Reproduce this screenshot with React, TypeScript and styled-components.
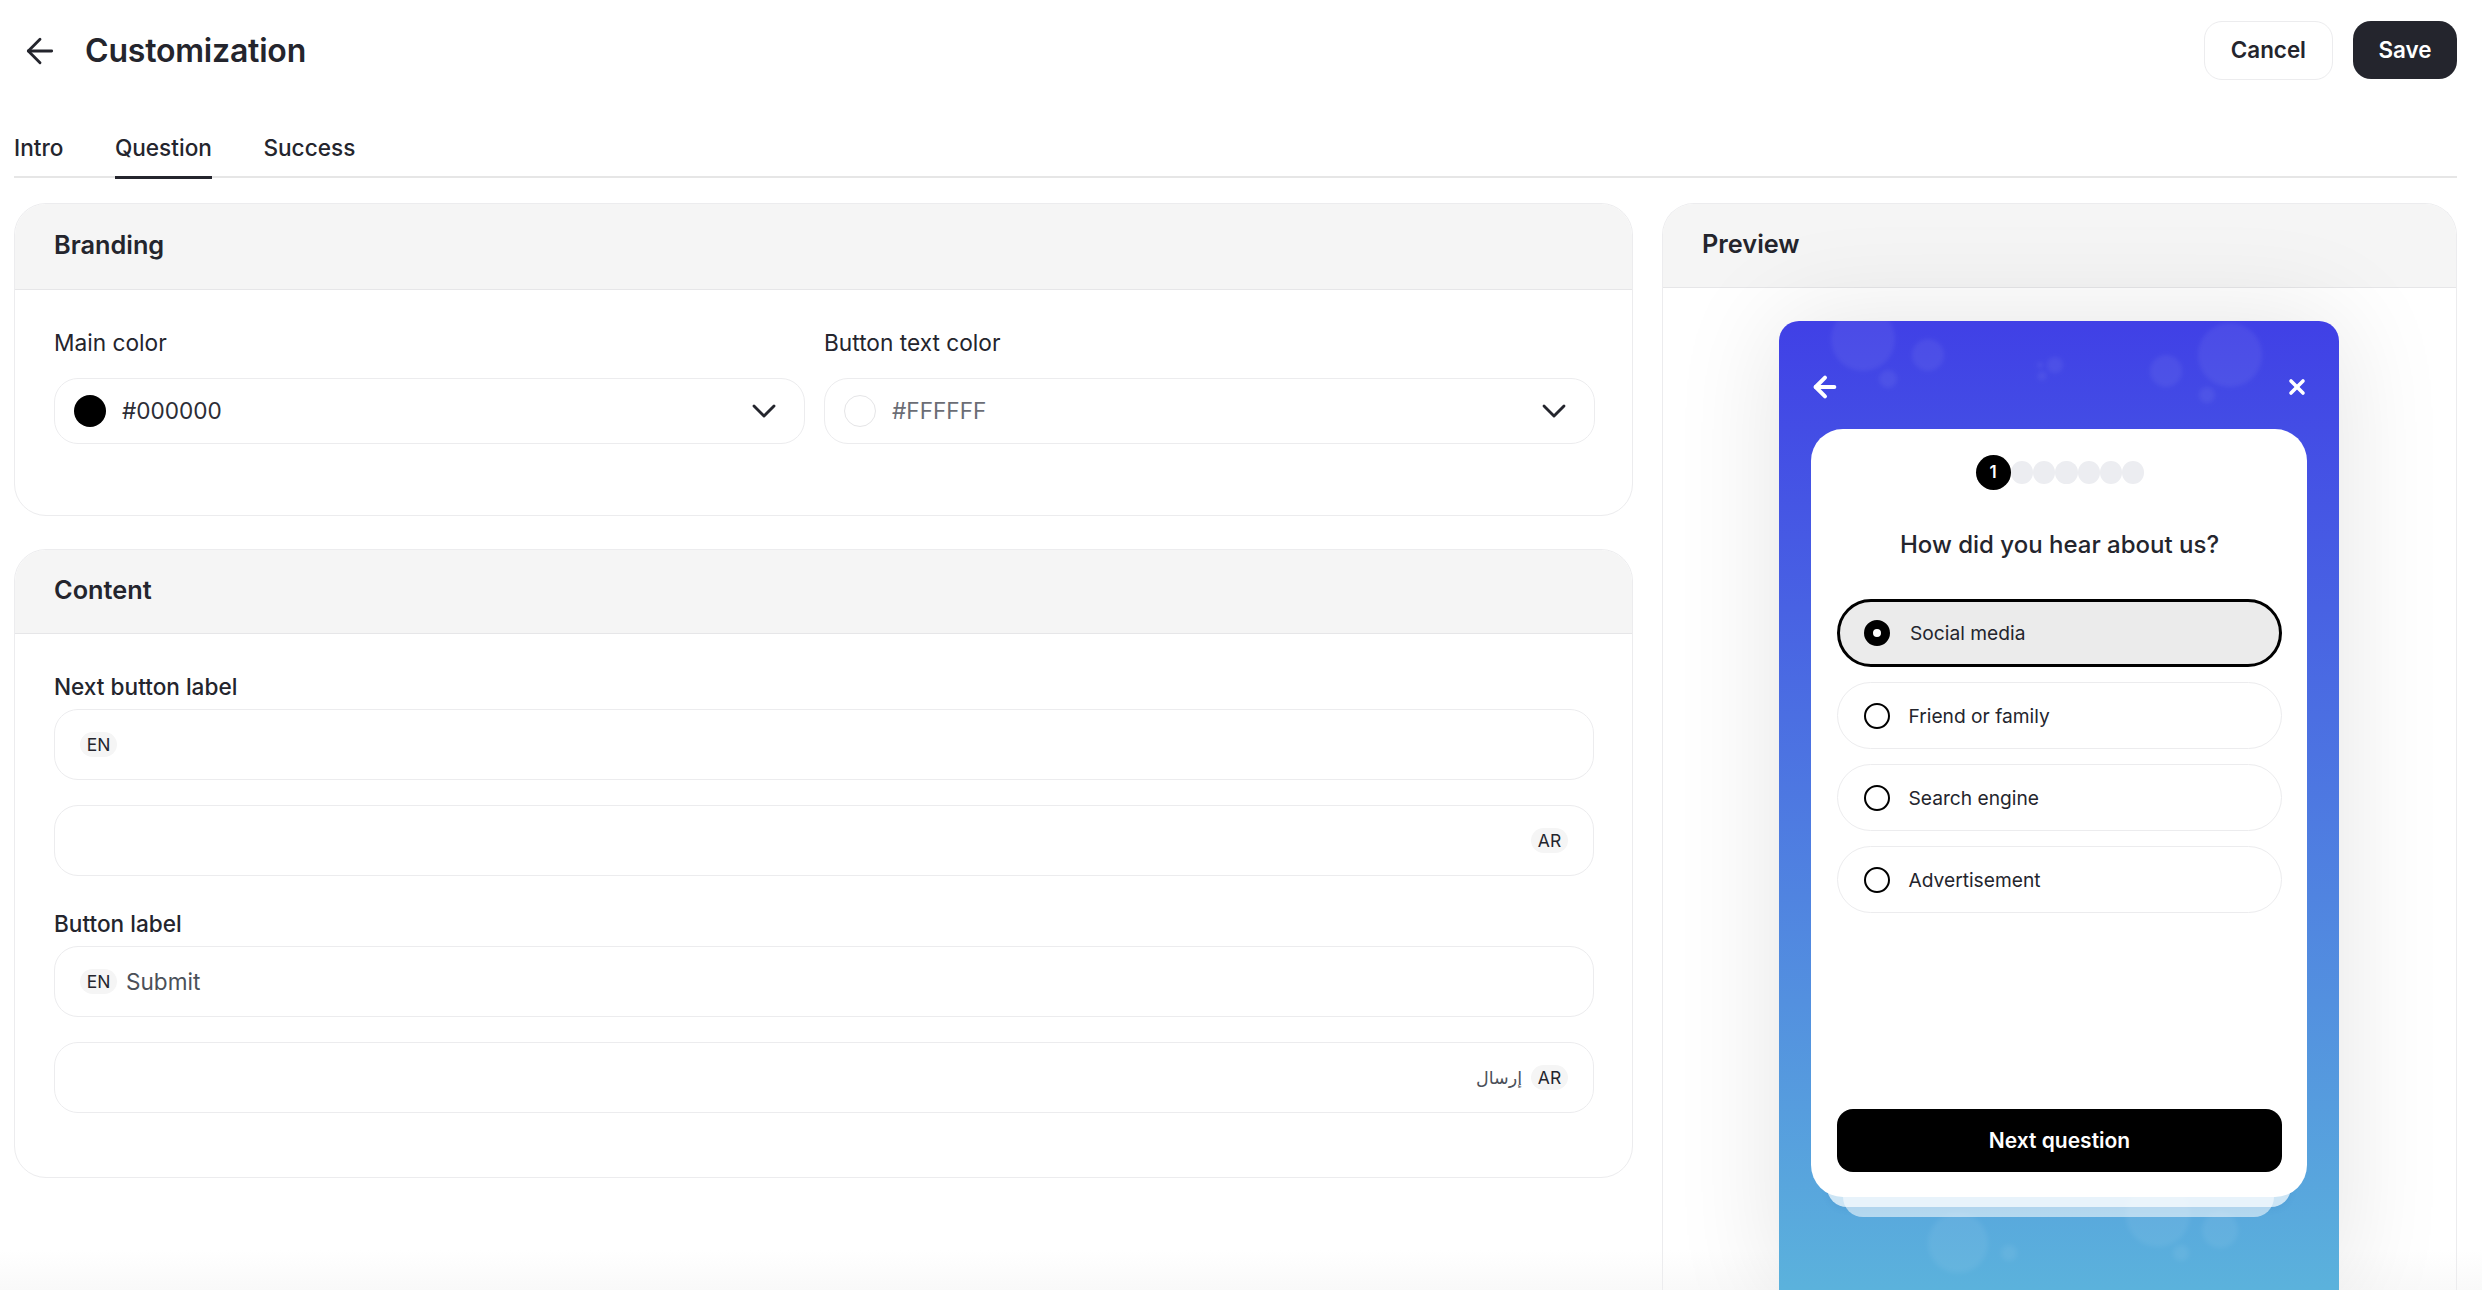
import React from "react";
import styled, { createGlobalStyle } from "styled-components";
import { ArrowLeft, ChevronDown, X } from "lucide-react";

const Global = createGlobalStyle`
  html, body { margin: 0; padding: 0; background: #fff; }
  body { font-family: Inter, "Noto Sans", sans-serif; color: #24252d; -webkit-font-smoothing: antialiased; }
  * { box-sizing: border-box; }
`;

const Page = styled.div`
  position: relative;
  width: 2482px;
  height: 1290px;
  overflow: hidden;
  padding: 0 25px 0 14px;
`;
const BottomFade = styled.div`
  position: absolute;
  left: 0;
  right: 0;
  bottom: 0;
  height: 40px;
  background: linear-gradient(to bottom, rgba(245, 245, 245, 0), rgba(245, 245, 245, 0.6));
  pointer-events: none;
`;
const Header = styled.header`
  position: relative;
  height: 102px;
  display: flex;
  align-items: center;
  justify-content: space-between;
`;
const TitleGroup = styled.div`
  display: flex;
  align-items: center;
  gap: 25px;
  padding-left: 6px;
`;
const Title = styled.h1`
  margin: 0;
  font-size: 32px;
  font-weight: 600;
  line-height: 40px;
  letter-spacing: -0.2px;
`;
const Actions = styled.div`
  display: flex;
  align-items: flex-start;
  gap: 20px;
  margin-top: -1px;
`;
const Button = styled.button<{ $primary?: boolean }>`
  height: ${(p) => (p.$primary ? 58 : 59)}px;
  padding: 0 ${(p) => (p.$primary ? 25.5 : 26)}px;
  border-radius: 18px;
  font: 600 22.4px/1 Inter, sans-serif;
  color: ${(p) => (p.$primary ? "#fff" : "#24252d")};
  background: ${(p) => (p.$primary ? "#24252d" : "#fff")};
  border: ${(p) => (p.$primary ? "none" : "1px solid #ececee")};
`;
const Tabs = styled.nav`
  position: relative;
  display: flex;
  gap: 51.5px;
  border-bottom: 2px solid #e6e6e6;
  height: 76px;
`;
const Tab = styled.div<{ $active?: boolean }>`
  padding-top: 30px;
  height: 77px;
  font-size: 22.6px;
  line-height: 32px;
  font-weight: 500;
  color: #24252d;
  border-bottom: 3px solid ${(p) => (p.$active ? "#24252d" : "transparent")};
`;
const Columns = styled.div`
  position: relative;
  display: grid;
  grid-template-columns: 1619px 795px;
  gap: 29px;
  margin-top: 25px;
  align-items: start;
`;
const LeftColumn = styled.div`
  display: flex;
  flex-direction: column;
  gap: 33px;
`;
const Card = styled.section`
  border: 1px solid #ececee;
  border-radius: 32px;
  overflow: hidden;
  background: #fff;
`;
const CardHeader = styled.div<{ $h?: number }>`
  height: ${(p) => p.$h ?? 86}px;
  padding: 0 39px 3px;
  display: flex;
  align-items: center;
  background: #f5f5f5;
  border-bottom: 1px solid #e6e6e8;
  border-radius: 31px 31px 0 0;
`;
const CardTitle = styled.h2`
  margin: 0;
  font-size: 25.3px;
  line-height: 32px;
  font-weight: 600;
`;
const BrandingBody = styled.div`
  display: grid;
  grid-template-columns: 751px 771px;
  gap: 19px;
  padding: 37px 38px 71px 39px;
`;
const FieldGroup = styled.div`
  display: flex;
  flex-direction: column;
  gap: 19px;
`;
const PlainLabel = styled.div`
  font-size: 22.7px;
  line-height: 32px;
  font-weight: 400;
  color: #24252d;
`;
const Select = styled.div`
  height: 66px;
  border: 1px solid #ececee;
  border-radius: 24px;
  padding: 0 20px 0 19px;
  display: flex;
  align-items: center;
`;
const Swatch = styled.span<{ $color: string }>`
  width: 32px;
  height: 32px;
  border-radius: 50%;
  background: ${(p) => p.$color};
  border: ${(p) => (p.$color === "#000000" ? "none" : "1px solid #e5e5e7")};
  flex: none;
  margin-right: 16px;
`;
const SelectValue = styled.span<{ $muted?: boolean }>`
  flex: 1;
  font-size: 22.6px;
  line-height: 32px;
  color: ${(p) => (p.$muted ? "#6b6d75" : "#2c2d35")};
`;
const ContentBody = styled.div`
  padding: 37px 38px 64px 39px;
  display: flex;
  flex-direction: column;
  gap: 32px;
`;
const LangGroup = styled.div`
  display: flex;
  flex-direction: column;
`;
const StrongLabel = styled.div`
  font-size: 22.6px;
  line-height: 32px;
  font-weight: 500;
  margin-bottom: 6px;
`;
const LangInput = styled.div<{ $rtl?: boolean }>`
  height: 71px;
  border: 1px solid #ececee;
  border-radius: 24px;
  padding: 0 25px;
  display: flex;
  flex-direction: ${(p) => (p.$rtl ? "row-reverse" : "row")};
  align-items: center;
  gap: 9px;
  & + & {
    margin-top: 25px;
  }
`;
const LangPill = styled.span`
  width: 37px;
  height: 25px;
  border-radius: 13px;
  background: #f5f5f5;
  font-size: 17.5px;
  line-height: 25px;
  font-weight: 400;
  text-align: center;
  color: #24252d;
`;
const InputText = styled.span<{ $arabic?: boolean }>`
  font-family: ${(p) => (p.$arabic ? '"DejaVu Sans", sans-serif' : "Inter, sans-serif")};
  font-size: ${(p) => (p.$arabic ? 17.5 : 22.6)}px;
  line-height: 32px;
  color: #4b5059;
`;
const PreviewCard = styled.section`
  height: 1087px;
  border: 1px solid #ececee;
  border-bottom: none;
  border-radius: 32px 32px 0 0;
`;
const PreviewBody = styled.div`
  padding: 33px 0 0 116px;
`;
const Phone = styled.div`
  position: relative;
  width: 560px;
  height: 969px;
  border-radius: 20px 20px 0 0;
  background: linear-gradient(to bottom, #4040e6 0%, #5bb2dc 100%);
  box-shadow: 0 0 110px rgba(0, 0, 0, 0.11);
  padding: 0 32px;
`;
const Bubbles = styled.svg`
  position: absolute;
  inset: 0;
  width: 100%;
  height: 100%;
  border-radius: 20px 20px 0 0;
`;
const PhoneTop = styled.div`
  position: relative;
  height: 108px;
  display: flex;
  align-items: center;
  justify-content: space-between;
  color: #fff;
  margin: 0 -2px 0 -2px;
  & > svg {
    margin-top: 24px;
  }
`;
const QuizStack = styled.div`
  position: relative;
  &::before,
  &::after {
    content: "";
    position: absolute;
    border-radius: 0 0 20px 20px;
    top: 700px;
  }
  &::before {
    left: 16px;
    right: 16px;
    bottom: -10px;
    background: rgba(255, 255, 255, 0.7);
    box-shadow: 0 2px 6px rgba(60, 110, 170, 0.12);
  }
  &::after {
    left: 32px;
    right: 33px;
    bottom: -20px;
    background: rgba(255, 255, 255, 0.55);
  }
`;
const QuizCard = styled.div`
  position: relative;
  z-index: 1;
  height: 768px;
  background: #fff;
  border-radius: 32px;
  padding: 26px 25px 25px 26px;
  display: flex;
  flex-direction: column;
  align-items: stretch;
`;
const Steps = styled.div`
  display: flex;
  align-items: center;
  justify-content: center;
  height: 35px;
  padding-left: 1px;
`;
const StepCurrent = styled.span`
  width: 35px;
  height: 35px;
  border-radius: 50%;
  background: #000;
  color: #fff;
  font-size: 17px;
  font-weight: 600;
  line-height: 35px;
  text-align: center;
`;
const StepDot = styled.span`
  width: 22.3px;
  height: 23px;
  border-radius: 50%;
  background: #ecedf1;
`;
const Question = styled.h3`
  margin: 38px 0 0;
  font-size: 24px;
  line-height: 34px;
  font-weight: 500;
  color: #24252d;
  text-align: center;
`;
const Options = styled.div`
  display: flex;
  flex-direction: column;
  gap: 15px;
  margin-top: 37px;
`;
const Option = styled.div<{ $active?: boolean }>`
  height: ${(p) => (p.$active ? 68 : 67)}px;
  border-radius: 34px;
  border: ${(p) => (p.$active ? "3px solid #000" : "1px solid #ececee")};
  background: ${(p) => (p.$active ? "#ebebeb" : "#fff")};
  padding-left: ${(p) => (p.$active ? 24 : 25.5)}px;
  display: flex;
  align-items: center;
  gap: ${(p) => (p.$active ? 20 : 19)}px;
  font-size: 19.2px;
  color: #24252d;
`;
const Radio = styled.span<{ $checked?: boolean }>`
  width: 26px;
  height: 26px;
  border-radius: 50%;
  border: ${(p) => (p.$checked ? "9px" : "2px")} solid #000;
  background: #fff;
  flex: none;
`;
const NextButton = styled.button`
  margin-top: auto;
  height: 63px;
  border: none;
  border-radius: 16px;
  background: #000;
  color: #fff;
  font: 600 21px/1 Inter, sans-serif;
`;

const BUBBLES: [number, number, number][] = [
  [84, 18, 32],
  [149, 34, 16],
  [109, 58, 9],
  [276, 44, 8],
  [263, 55, 4.5],
  [261, 44, 3],
  [451, 34, 32],
  [387, 50, 16],
  [428, 74, 8],
  [179, 922, 30],
  [379, 894, 32],
  [441, 909, 18],
  [402, 932, 8],
  [230, 932, 8],
];

const OPTIONS = ["Social media", "Friend or family", "Search engine", "Advertisement"];

export default function App() {
  return (
    <Page>
      <Global />
      <BottomFade />
      <Header>
        <TitleGroup>
          <ArrowLeft size={40} strokeWidth={1.7} color="#24252d" />
          <Title>Customization</Title>
        </TitleGroup>
        <Actions>
          <Button>Cancel</Button>
          <Button $primary>Save</Button>
        </Actions>
      </Header>
      <Tabs>
        <Tab>Intro</Tab>
        <Tab $active>Question</Tab>
        <Tab>Success</Tab>
      </Tabs>
      <Columns>
        <LeftColumn>
          <Card>
            <CardHeader>
              <CardTitle>Branding</CardTitle>
            </CardHeader>
            <BrandingBody>
              <FieldGroup>
                <PlainLabel>Main color</PlainLabel>
                <Select>
                  <Swatch $color="#000000" />
                  <SelectValue>#000000</SelectValue>
                  <ChevronDown size={40} strokeWidth={1.7} color="#24252d" />
                </Select>
              </FieldGroup>
              <FieldGroup>
                <PlainLabel>Button text color</PlainLabel>
                <Select>
                  <Swatch $color="#FFFFFF" />
                  <SelectValue $muted>#FFFFFF</SelectValue>
                  <ChevronDown size={40} strokeWidth={1.7} color="#24252d" />
                </Select>
              </FieldGroup>
            </BrandingBody>
          </Card>
          <Card>
            <CardHeader $h={84}>
              <CardTitle>Content</CardTitle>
            </CardHeader>
            <ContentBody>
              <LangGroup>
                <StrongLabel>Next button label</StrongLabel>
                <LangInput>
                  <LangPill>EN</LangPill>
                </LangInput>
                <LangInput $rtl>
                  <LangPill>AR</LangPill>
                </LangInput>
              </LangGroup>
              <LangGroup>
                <StrongLabel>Button label</StrongLabel>
                <LangInput>
                  <LangPill>EN</LangPill>
                  <InputText>Submit</InputText>
                </LangInput>
                <LangInput $rtl>
                  <LangPill>AR</LangPill>
                  <InputText $arabic dir="rtl" lang="ar">إرسال</InputText>
                </LangInput>
              </LangGroup>
            </ContentBody>
          </Card>
        </LeftColumn>
        <PreviewCard>
          <CardHeader $h={84}>
            <CardTitle>Preview</CardTitle>
          </CardHeader>
          <PreviewBody>
            <Phone>
              <Bubbles viewBox="0 0 560 969" aria-hidden="true">
                <defs>
                  <filter id="soft">
                    <feGaussianBlur stdDeviation="2" />
                  </filter>
                  <clipPath id="phoneClip">
                    <rect width="560" height="969" />
                  </clipPath>
                </defs>
                <g clipPath="url(#phoneClip)">
                  <g fill="#fff" fillOpacity="0.06" filter="url(#soft)">
                    {BUBBLES.map(([cx, cy, r]) => (
                      <circle key={`${cx}-${cy}`} cx={cx} cy={cy} r={r} />
                    ))}
                  </g>
                </g>
              </Bubbles>
              <PhoneTop>
                <ArrowLeft size={32} strokeWidth={3} />
                <X size={24} strokeWidth={3.6} />
              </PhoneTop>
              <QuizStack>
                <QuizCard>
                  <Steps>
                    <StepCurrent>1</StepCurrent>
                    {[0, 1, 2, 3, 4, 5].map((i) => (
                      <StepDot key={i} />
                    ))}
                  </Steps>
                  <Question>How did you hear about us?</Question>
                  <Options>
                    {OPTIONS.map((o, i) => (
                      <Option key={o} $active={i === 0}>
                        <Radio $checked={i === 0} />
                        {o}
                      </Option>
                    ))}
                  </Options>
                  <NextButton>Next question</NextButton>
                </QuizCard>
              </QuizStack>
            </Phone>
          </PreviewBody>
        </PreviewCard>
      </Columns>
    </Page>
  );
}
